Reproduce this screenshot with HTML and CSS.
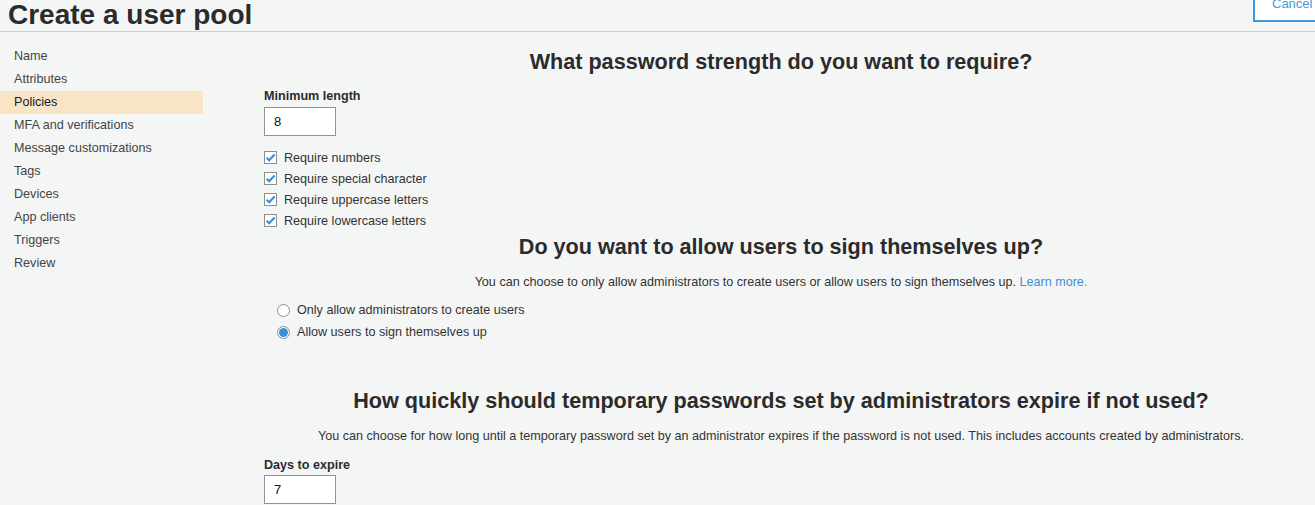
FILE: index.html
```html
<!DOCTYPE html>
<html lang="en">
<head>
<meta charset="utf-8">
<title>Create a user pool</title>
<link rel="stylesheet" href="styles.css">
</head>
<body>
<header class="topbar">
  <h1 class="page-title">Create a user pool</h1>
  <button class="cancel-btn" type="button">Cancel</button>
</header>
<div class="layout">
  <nav class="sidebar">
    <div class="nav-item">Name</div>
    <div class="nav-item">Attributes</div>
    <div class="nav-item active">Policies</div>
    <div class="nav-item">MFA and verifications</div>
    <div class="nav-item">Message customizations</div>
    <div class="nav-item">Tags</div>
    <div class="nav-item">Devices</div>
    <div class="nav-item">App clients</div>
    <div class="nav-item">Triggers</div>
    <div class="nav-item">Review</div>
  </nav>
  <main class="main">
    <h2 class="section-title">What password strength do you want to require?</h2>
    <div class="field">
      <div class="field-label label-min">Minimum length</div>
      <div class="text-input">8</div>
      <div class="checks">
        <div class="check-row"><span class="checkbox"><svg viewBox="0 0 13 13" width="13" height="13"><path d="M2.6 6.8 L5.2 9.3 L10.6 3.4" fill="none" stroke="#3b8fd8" stroke-width="2.2"/></svg></span>Require numbers</div>
        <div class="check-row"><span class="checkbox"><svg viewBox="0 0 13 13" width="13" height="13"><path d="M2.6 6.8 L5.2 9.3 L10.6 3.4" fill="none" stroke="#3b8fd8" stroke-width="2.2"/></svg></span>Require special character</div>
        <div class="check-row"><span class="checkbox"><svg viewBox="0 0 13 13" width="13" height="13"><path d="M2.6 6.8 L5.2 9.3 L10.6 3.4" fill="none" stroke="#3b8fd8" stroke-width="2.2"/></svg></span>Require uppercase letters</div>
        <div class="check-row"><span class="checkbox"><svg viewBox="0 0 13 13" width="13" height="13"><path d="M2.6 6.8 L5.2 9.3 L10.6 3.4" fill="none" stroke="#3b8fd8" stroke-width="2.2"/></svg></span>Require lowercase letters</div>
      </div>
    </div>

    <h2 class="section-title title-2">Do you want to allow users to sign themselves up?</h2>
    <p class="section-desc desc-2">You can choose to only allow administrators to create users or allow users to sign themselves up. <a class="link" href="#">Learn more.</a></p>
    <div class="radios">
      <div class="radio-row"><span class="radio"></span>Only allow administrators to create users</div>
      <div class="radio-row"><span class="radio checked"></span>Allow users to sign themselves up</div>
    </div>

    <h2 class="section-title title-3">How quickly should temporary passwords set by administrators expire if not used?</h2>
    <p class="section-desc desc-3">You can choose for how long until a temporary password set by an administrator expires if the password is not used. This includes accounts created by administrators.</p>
    <div class="field">
      <div class="field-label label-days">Days to expire</div>
      <div class="text-input input-days">7</div>
    </div>
  </main>
</div>
</body>
</html>
```

FILE: styles.css
```css
* { box-sizing: border-box; }
html, body {
  margin: 0;
  padding: 0;
  background: #f4f6f6;
  overflow: hidden;
}
body {
  font-family: Arial, "Liberation Sans", sans-serif;
  color: #333;
  font-size: 12.6px;
}
.topbar {
  display: flex;
  justify-content: space-between;
  align-items: flex-start;
  height: 32px;
  border-bottom: 1px solid #cfd1d1;
  padding-left: 8px;
}
.page-title {
  margin: 0;
  font-size: 28px;
  line-height: 30px;
  font-weight: bold;
  color: #2b2b2b;
}
.cancel-btn {
  margin-top: -14px;
  margin-right: -20px;
  width: 82px;
  height: 36px;
  background: #fff;
  border: 2px solid #3f98d9;
  color: #4a98d6;
  font-family: Arial, "Liberation Sans", sans-serif;
  font-size: 13px;
  text-align: left;
  padding: 0 0 0 17px;
  line-height: 14px;
}
.layout {
  display: flex;
}
.sidebar {
  width: 203px;
  flex-shrink: 0;
  padding-top: 13px;
}
.nav-item {
  height: 23px;
  line-height: 23px;
  padding-left: 14px;
  color: #444;
}
.nav-item.active {
  background: #f9e5c6;
  color: #16191f;
}
.main {
  flex: 1;
  padding: 18px 0 0 44px;
}
.section-title {
  margin: 0;
  text-align: center;
  font-size: 21.6px;
  line-height: 24px;
  font-weight: bold;
  color: #2b2b2b;
}
.field {
  padding-left: 17px;
}
.field-label {
  font-weight: bold;
  line-height: 16px;
  color: #2b2b2b;
}
.label-min { margin-top: 14px; }
.label-days { margin-top: 13px; }
.text-input {
  margin-top: 3px;
  width: 72px;
  height: 29px;
  background: #fff;
  border: 1px solid #8f9494;
  padding-left: 9px;
  line-height: 27px;
  color: #111;
  font-size: 13px;
}
.input-days { margin-top: 2px; }
.checks {
  margin-top: 11px;
}
.check-row {
  display: flex;
  align-items: center;
  height: 21px;
  color: #333;
}
.checkbox {
  width: 13px;
  height: 13px;
  border: 1px solid #8a8f8f;
  background: #fff;
  margin-right: 7px;
  display: flex;
}
.checkbox svg { margin: -1px; }
.title-2 { margin-top: 4px; }
.section-desc {
  margin: 15px 0 0 0;
  text-align: center;
  line-height: 16px;
  font-size: 12.6px;
  color: #333;
}
.link {
  color: #3f8fd6;
  text-decoration: none;
}
.radios {
  margin-top: 9px;
  padding-left: 30px;
}
.radio-row {
  display: flex;
  align-items: center;
  height: 22px;
}
.radio {
  width: 13px;
  height: 13px;
  border: 1px solid #8a8f8f;
  border-radius: 50%;
  background: #fff;
  margin-right: 7px;
  display: flex;
  align-items: center;
  justify-content: center;
}
.radio.checked::after {
  content: "";
  width: 9px;
  height: 9px;
  border-radius: 50%;
  background: #3b8fd8;
}
.title-3 { margin-top: 46px; }
```
